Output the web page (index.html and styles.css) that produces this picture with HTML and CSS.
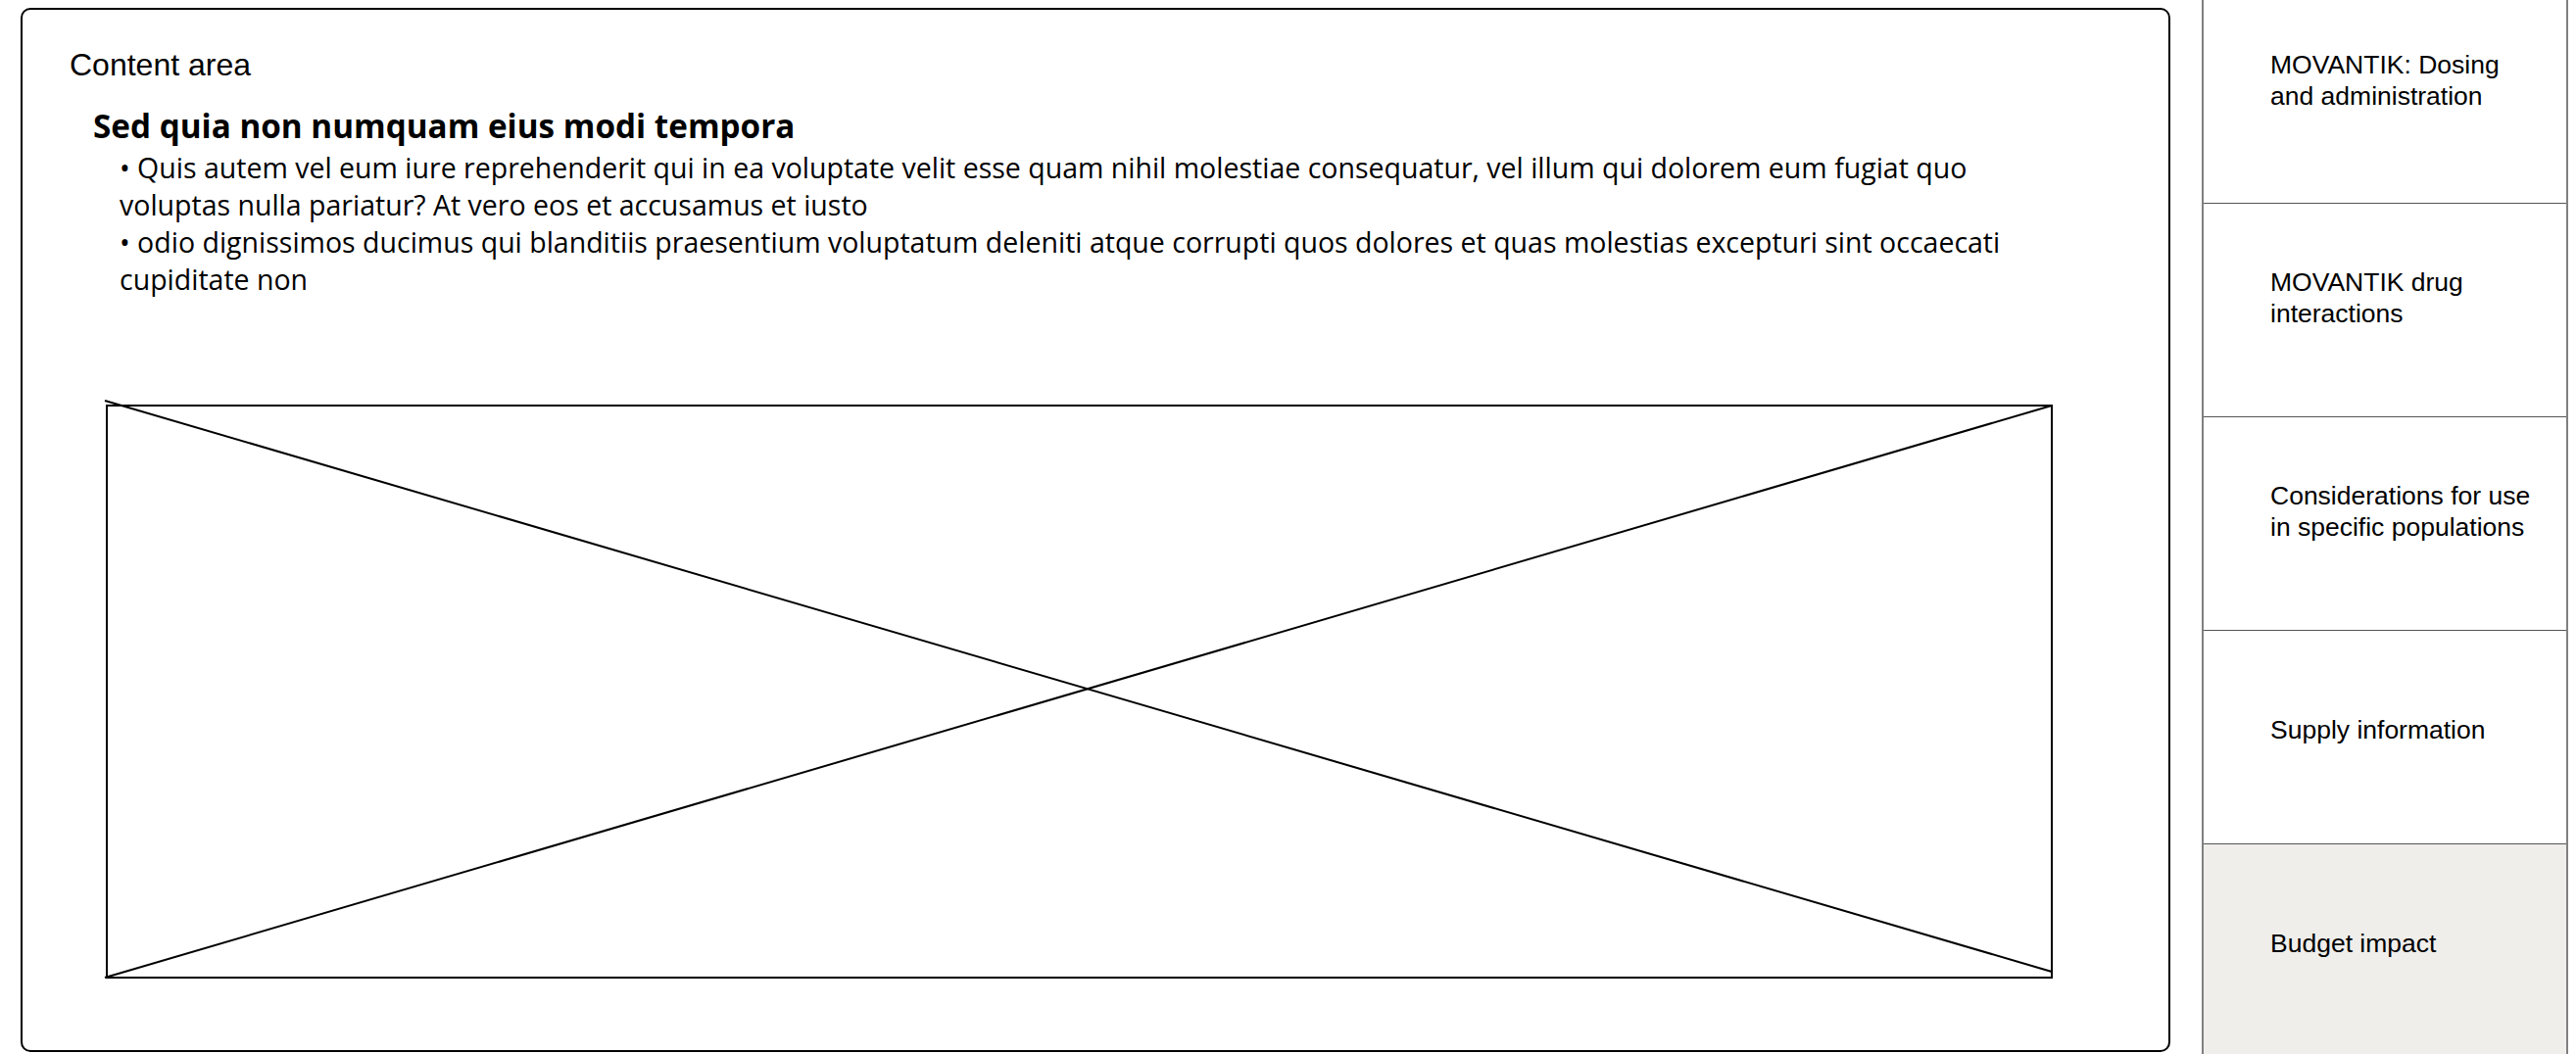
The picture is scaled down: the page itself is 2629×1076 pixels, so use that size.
FILE: index.html
```html
<!DOCTYPE html>
<html lang="en">
<head>
    <meta charset="UTF-8">
    <meta name="viewport" content="width=device-width, initial-scale=1.0">
    <title>MOVANTIK - Budget impact</title>
    <link rel="stylesheet" href="styles.css">
</head>
<body>
    <div class="page">
        <main class="content">
            <p class="content-label">Content area</p>
            <section class="article">
                <h2>Sed quia non numquam eius modi tempora</h2>
                <div class="bullets">
                    <p>• Quis autem vel eum iure reprehenderit qui in ea voluptate velit esse quam nihil molestiae consequatur, vel illum qui dolorem eum fugiat quo voluptas nulla pariatur? At vero eos et accusamus et iusto</p>
                    <p>• odio dignissimos ducimus qui blanditiis praesentium voluptatum deleniti atque corrupti quos dolores et quas molestias excepturi sint occaecati cupiditate non</p>
                </div>
            </section>
            <div class="figure">
                <svg width="1985" height="584" viewBox="0 0 1985 584">
                    <rect x="0" y="0" width="1985" height="584" fill="none" stroke="#000" stroke-width="2"/>
                    <line x1="-2" y1="-5" x2="1985" y2="578" stroke="#000" stroke-width="2"/>
                    <line x1="-2" y1="584" x2="1985" y2="0" stroke="#000" stroke-width="2"/>
                </svg>
            </div>
        </main>
        <nav class="sidebar">
            <a class="nav-item" href="#">MOVANTIK: Dosing and administration</a>
            <a class="nav-item" href="#">MOVANTIK drug interactions</a>
            <a class="nav-item" href="#">Considerations for use in specific populations</a>
            <a class="nav-item single" href="#">Supply information</a>
            <a class="nav-item single active" href="#">Budget impact</a>
        </nav>
    </div>
</body>
</html>
```

FILE: styles.css
```css
/* Reset */
* {
    margin: 0;
    padding: 0;
    box-sizing: border-box;
}

body {
    background: #fff;
    color: #000;
    overflow: hidden;
}

.page {
    display: flex;
    align-items: flex-start;
    gap: 32px;
    padding: 8px 8px 0 21px;
    height: 1076px;
}

/* Content box */
.content {
    flex: 1;
    height: 1066px;
    border: 2px solid #000;
    border-radius: 10px;
    padding: 38px 48px 0 48px;
}

.content-label {
    font-family: "Liberation Sans", Arial, sans-serif;
    font-size: 32px;
}

.article {
    margin: 24px 0 0 24px;
    font-family: "Open Sans", Lato, sans-serif;
}

.article h2 {
    font-size: 33.25px;
    line-height: 38px;
    font-weight: bold;
}

.bullets {
    margin: 5px 0 0 27px;
    width: 1962px;
    font-size: 28.5px;
    line-height: 38px;
}

.figure {
    margin: 110px 0 0 38px;
}

.figure svg {
    display: block;
    overflow: visible;
}

/* Sidebar */
.sidebar {
    width: 374px;
    margin-top: -23px;
    border-left: 2px solid #808080;
    border-right: 2px solid #808080;
    display: flex;
    flex-direction: column;
}

.nav-item {
    display: flex;
    align-items: center;
    height: 218px;
    padding: 0 25px 25px 68px;
    border-bottom: 1px solid #555;
    font-family: "Liberation Sans", Arial, sans-serif;
    font-size: 26.5px;
    line-height: 32px;
    color: #000;
    text-decoration: none;
}

.nav-item:first-child {
    height: 223px;
    padding-bottom: 28px;
}

.nav-item.single {
    padding-bottom: 15px;
}

.nav-item.active {
    background: #efeeeb;
}
```
